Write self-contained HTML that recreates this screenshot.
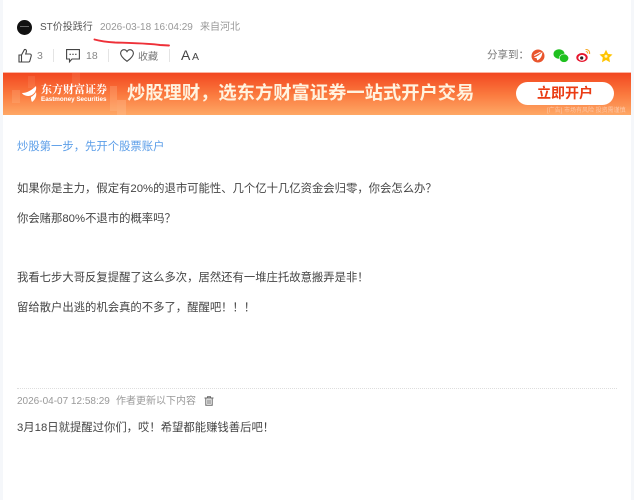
<!DOCTYPE html>
<html lang="zh">
<head>
<meta charset="utf-8">
<style>
html,body{margin:0;padding:0}
body{width:634px;height:500px;position:relative;overflow:hidden;background:#fff;font-family:"Liberation Sans","Noto Sans CJK SC",sans-serif;color:#333}
#w{position:absolute;left:0;top:0;width:634px;height:500px;filter:blur(.3px)}
.t{position:absolute;white-space:nowrap;line-height:16px}
.edge{position:absolute;top:0;height:500px;width:3px;background:#f5f7fa}
svg{position:absolute;overflow:visible}
.sep{position:absolute;top:49px;width:1px;height:13px;background:#e4e4e4}
.b{font-size:11.35px;color:#444}
</style>
</head>
<body>
<div id="w">
<div class="edge" style="left:0"></div>
<div class="edge" style="left:631px"></div>

<div style="position:absolute;left:17px;top:20px;width:15px;height:15px;border-radius:50%;background:#111"></div>
<div style="position:absolute;left:20px;top:26px;width:9px;height:1px;background:#666"></div>
<div class="t" style="left:40px;top:20px;font-size:10px;color:#555">ST价投践行</div>
<div class="t" style="left:100px;top:20px;font-size:10px;color:#999">2026-03-18 16:04:29</div>
<div class="t" style="left:200px;top:20px;font-size:10px;color:#999">来自河北</div>
<svg style="left:0;top:0" width="634" height="60"><path d="M94.500 39.500C100 41 106 42 115 42.500C130 43 148 43.300 160 45L169 45.500" fill="none" stroke="#ee3038" stroke-width="1.900" stroke-linecap="round"/></svg>

<svg style="left:18px;top:48px" width="14" height="15" viewBox="0 0 14 15"><path d="M1 7H3.500V14H1ZM3.500 7L6.500 1.500C8 1 8.800 2.500 8.300 4L7.700 6H12C13 6 13.500 7 13.200 8L11.800 13C11.600 13.700 11 14 10.400 14H3.500" fill="none" stroke="#444" stroke-width="1.100"/></svg>
<div class="t" style="left:37px;top:48px;font-size:10.500px;color:#888">3</div>
<div class="sep" style="left:53px"></div>
<svg style="left:66px;top:49px" width="14" height="14" viewBox="0 0 14 14"><path d="M.6.6H13.400V10H6L3.500 12.800V10H.6Z" fill="none" stroke="#444" stroke-width="1.100"/><path d="M3.500 5.300H4.900M6.300 5.300H7.700M9.100 5.300H10.500" stroke="#444" stroke-width="1.200"/></svg>
<div class="t" style="left:86px;top:48px;font-size:10.500px;color:#888">18</div>
<div class="sep" style="left:108px"></div>
<svg style="left:120px;top:49px" width="14" height="13" viewBox="0 0 14 13"><path d="M7 12.300C2.500 9 .6 6.800.6 4.200C.6 2.200 2.100.7 3.900.7C5.200.7 6.300 1.400 7 2.600C7.700 1.400 8.800.7 10.100.7C11.900.7 13.400 2.200 13.400 4.200C13.400 6.800 11.500 9 7 12.300Z" fill="none" stroke="#444" stroke-width="1.100"/></svg>
<div class="t" style="left:138px;top:50px;font-size:10px;color:#777">收藏</div>
<div class="sep" style="left:169px"></div>
<div class="t" style="left:181px;top:47px;font-size:14px;color:#444">A</div>
<div class="t" style="left:192px;top:49px;font-size:10.500px;color:#444">A</div>

<div class="t" style="left:487px;top:47px;font-size:10.500px;color:#777">分享到&#xFF1A;</div>
<svg style="left:531px;top:49px" width="14" height="14" viewBox="0 0 14 14"><circle cx="7" cy="7" r="6.500" fill="#e9552d"/><path d="M2.800 8.500C6 7.500 9 5.500 11.300 3C11.300 6.500 9.800 10 6.200 11.400L5.700 9.300Z" fill="#fff"/><path d="M3.200 6.500L9.500 3.200" stroke="#fff" stroke-width="1.100"/></svg>
<svg style="left:553px;top:49px" width="16" height="14" viewBox="0 0 16 14"><ellipse cx="6" cy="5" rx="5.500" ry="4.800" fill="#1fc01f"/><ellipse cx="11" cy="9.200" rx="4.700" ry="4.200" fill="#1fc01f" stroke="#fff" stroke-width=".6"/></svg>
<svg style="left:576px;top:48px" width="15" height="15" viewBox="0 0 15 15"><ellipse cx="6" cy="9.500" rx="5.700" ry="4.500" fill="#e6162d"/><ellipse cx="6" cy="9.800" rx="3.700" ry="2.900" fill="#fff"/><circle cx="5.700" cy="10" r="1.600" fill="#222"/><path d="M9.500 1.500C12 1.200 14 3 13.600 6M9.800 3.700C11 3.500 11.900 4.400 11.700 5.600" fill="none" stroke="#f5a623" stroke-width="1"/></svg>
<svg style="left:599px;top:49px" width="14" height="14" viewBox="0 0 14 14"><path d="M7 .7L9 4.900L13.500 5.500L10.200 8.600L11 13.200L7 11L3 13.200L3.800 8.600L.5 5.500L5 4.900Z" fill="#ffc400"/><circle cx="7" cy="7.300" r="1.500" fill="#fff6c4"/></svg>

<div style="position:absolute;left:3px;top:72px;width:628px;height:43px;background:linear-gradient(#f2451f,#fb7c40 55%,#fea866);overflow:hidden">
  <div style="position:absolute;left:0;right:0;top:0;height:1px;background:#fbb5a3"></div>
  <div style="position:absolute;left:9px;top:18px;width:8px;height:13px;background:rgba(255,200,160,.2)"></div>
  <div style="position:absolute;left:25px;top:4px;width:7px;height:12px;background:rgba(255,200,160,.13)"></div>
  <div style="position:absolute;left:69px;top:1px;width:8px;height:13px;background:rgba(255,200,160,.13)"></div>
  <div style="position:absolute;left:107px;top:14px;width:7px;height:25px;background:rgba(255,200,160,.25)"></div>
  <div style="position:absolute;left:114px;top:28px;width:9px;height:15px;background:rgba(255,200,160,.3)"></div>
  <svg style="left:19px;top:14px" width="15" height="17" viewBox="0 0 15 17"><path d="M0 7C5 7 10 4 14 0C15 5 12 9 7 10C4 10 1 9 0 7ZM9 11C11 10 13 8 14 6C15 10 13 14 10 16C9 14 9 13 9 11Z" fill="#fff"/></svg>
  <div class="t" style="left:38px;top:10px;font-family:'Noto Serif CJK SC',serif;font-size:11px;line-height:15px;color:#fff;font-weight:700">东方财富证券</div>
  <div class="t" style="left:38px;top:24px;font-size:6.300px;line-height:8px;color:#fff;font-weight:700">Eastmoney Securities</div>
  <div class="t" style="left:124px;top:9px;font-size:18.300px;line-height:24px;color:#fff3df;font-weight:700">炒股理财&#xFF0C;选东方财富证券一站式开户交易</div>
  <div style="position:absolute;left:513px;top:10px;width:98px;height:23px;border-radius:12px;background:#fff;color:#ea3c14;font-size:14px;font-weight:700;line-height:23px;text-align:center">立即开户</div>
  <div class="t" style="left:544px;top:35px;font-size:6px;line-height:8px;color:#fdc7a6">[广告] 市场有风险 投资需谨慎</div>
</div>

<div class="t" style="left:17px;top:139px;font-size:11.35px;color:#5a9de8">炒股第一步&#xFF0C;先开个股票账户</div>
<div class="t b" style="left:17px;top:181px">如果你是主力&#xFF0C;假定有20%的退市可能性、几个亿十几亿资金会归零&#xFF0C;你会怎么办&#xFF1F;</div>
<div class="t b" style="left:17px;top:211px">你会赌那80%不退市的概率吗&#xFF1F;</div>
<div class="t b" style="left:17px;top:270px">我看七步大哥反复提醒了这么多次&#xFF0C;居然还有一堆庄托故意搬弄是非&#xFF01;</div>
<div class="t b" style="left:17px;top:300px">留给散户出逃的机会真的不多了&#xFF0C;醒醒吧&#xFF01;&#xFF01;&#xFF01;</div>

<div style="position:absolute;left:17px;top:388px;width:600px;border-top:1px dotted #ddd"></div>
<div class="t" style="left:17px;top:394px;font-size:10px;color:#999">2026-04-07 12:58:29</div>
<div class="t" style="left:116px;top:394px;font-size:10px;color:#999">作者更新以下内容</div>
<svg style="left:204px;top:396px" width="10" height="10" viewBox="0 0 10 10"><path d="M.5 2H9.500M3.500 2V.7H6.500V2M1.800 2V9.300H8.200V2M4 3.500V8M6 3.500V8" fill="none" stroke="#666" stroke-width="1"/></svg>
<div class="t b" style="left:17px;top:420px">3月18日就提醒过你们&#xFF0C;哎&#xFF01;希望都能赚钱善后吧&#xFF01;</div>
</div>
</body>
</html>
